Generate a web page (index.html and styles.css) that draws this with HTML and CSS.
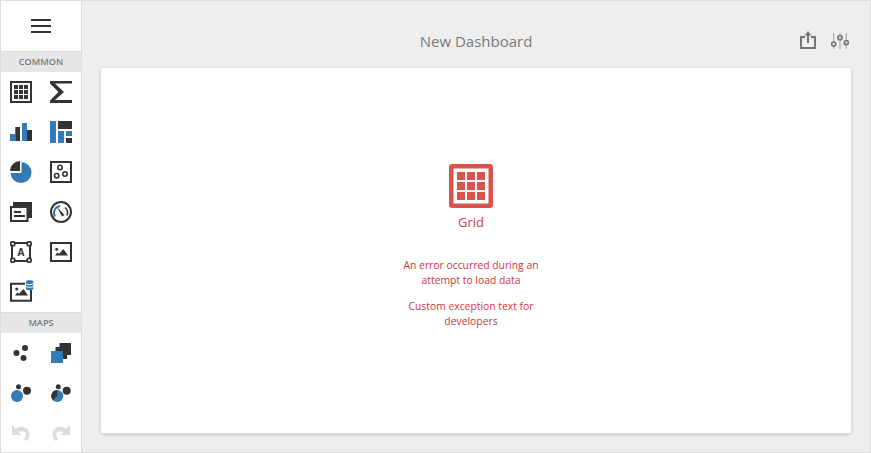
FILE: index.html
```html
<!DOCTYPE html>
<html lang="en">
<head>
  <meta charset="UTF-8">
  <title>New Dashboard</title>
  <link rel="stylesheet" href="styles.css">
</head>
<body>

  <div class="app">
    <div class="toolbox">
      <div class="menu-btn">
        <svg width="22" height="16" viewBox="0 0 22 16"><path d="M1 2h20M1 8h20M1 14h20" stroke="#333" stroke-width="2"/></svg>
      </div>

      <div class="group-title">COMMON</div>
      <div class="items">
        <div class="item">
          <svg width="22" height="22" viewBox="0 0 22 22"><rect x="1" y="1" width="20" height="20" fill="none" stroke="#333" stroke-width="2"/><path d="M4 4h4v4H4zM9 4h4v4H9zM14 4h4v4h-4zM4 9h4v4H4zM9 9h4v4H9zM14 9h4v4h-4zM4 14h4v4H4zM9 14h4v4H9zM14 14h4v4h-4z" fill="#333"/></svg>
        </div>
        <div class="item">
          <svg width="22" height="22" viewBox="0 0 22 22"><path d="M0 0h22v2.500H5l9 8.500-9 8h17V22H0v-2.500L8.500 11 0 2.500z" fill="#333"/></svg>
        </div>
        <div class="item">
          <svg width="22" height="22" viewBox="0 0 22 22"><path d="M0 13h5.300v7H0zM12 2h5v18h-5z" fill="#337ab7"/><path d="M5.300 6H10v14H5.300zM17 9h5v11h-5z" fill="#333"/></svg>
        </div>
        <div class="item">
          <svg width="22" height="22" viewBox="0 0 22 22"><path d="M0 0h6v22H0zM8 10h6v12H8zM16 10h6v5h-6z" fill="#337ab7"/><path d="M8 0h14v8H8zM16 17h6v5h-6z" fill="#333"/></svg>
        </div>
        <div class="item">
          <svg width="22" height="22" viewBox="0 0 22 22"><path d="M0 10A10 10 0 0 1 10 0v10z" fill="#333"/><path d="M11.500 1a10.500 10.500 0 1 1-11 11h11z" fill="#337ab7"/></svg>
        </div>
        <div class="item">
          <svg width="22" height="22" viewBox="0 0 22 22"><rect x="1" y="1" width="20" height="20" fill="none" stroke="#333" stroke-width="2"/><g fill="none" stroke="#333" stroke-width="1.600"><circle cx="10" cy="6.500" r="2.200"/><circle cx="6.700" cy="14.700" r="2.200"/><circle cx="15" cy="13" r="2.200"/></g></svg>
        </div>
        <div class="item">
          <svg width="22" height="20" viewBox="0 0 22 20"><path d="M3 0h19v16H3z" fill="#333"/><rect x="1" y="5" width="16.500" height="14" fill="#fff" stroke="#333" stroke-width="2"/><path d="M4 9h7v2H4zM4 13h11v2H4z" fill="#333"/></svg>
        </div>
        <div class="item">
          <svg width="22" height="22" viewBox="0 0 22 22"><circle cx="11" cy="11" r="10" fill="none" stroke="#333" stroke-width="2"/><path d="M5 15.500A7 7 0 0 1 10 5" fill="none" stroke="#337ab7" stroke-width="2"/><path d="M15 6.500a7 7 0 0 1 2 8" fill="none" stroke="#333" stroke-width="1.500"/><path d="M7 6l7.500 8-2.500 1.500z" fill="#333"/></svg>
        </div>
        <div class="item">
          <svg width="22" height="22" viewBox="0 0 22 22"><rect x="2" y="2" width="18" height="18" fill="none" stroke="#333" stroke-width="2"/><g fill="#fff" stroke="#333" stroke-width="1.700"><rect x="0.900" y="0.900" width="3.800" height="3.800" rx="1"/><rect x="17.300" y="0.900" width="3.800" height="3.800" rx="1"/><rect x="0.900" y="17.300" width="3.800" height="3.800" rx="1"/><rect x="17.300" y="17.300" width="3.800" height="3.800" rx="1"/></g><text class="glyph" x="11" y="14.500" text-anchor="middle">A</text></svg>
        </div>
        <div class="item">
          <svg width="22" height="20" viewBox="0 0 22 20"><rect x="1" y="1" width="20" height="18" fill="none" stroke="#333" stroke-width="2"/><circle cx="6.700" cy="7.300" r="1.500" fill="#333"/><path d="M5 13.500l2.500-3 1.500 1.300L13.500 7l4.500 6.500z" fill="#333"/></svg>
        </div>
        <div class="item item-raised">
          <svg width="24" height="22" viewBox="0 0 24 22"><path d="M15 2.700H0v19h22V10h-2v9.700H2V4.700h13z" fill="#333"/><circle cx="6.700" cy="9" r="1.500" fill="#333"/><path d="M5 15.500l2.500-3 1.500 1.300L13.500 9l4.500 6.500z" fill="#333"/><path d="M16 1.500C16 -.2 23.300 -.2 23.300 1.500v7.500C23.300 10.500 16 10.500 16 9z" fill="#337ab7"/><path d="M16 3.800c1.500 1 5.800 1 7.300 0M16 6.500c1.500 1 5.800 1 7.300 0" fill="none" stroke="#fff"/></svg>
        </div>
      </div>

      <div class="group-title">MAPS</div>
      <div class="items">
        <div class="item">
          <svg width="16" height="16" viewBox="0 0 16 16"><circle cx="3.500" cy="8" r="3" fill="#333"/><circle cx="12" cy="3" r="3" fill="#333"/><circle cx="10.500" cy="13" r="3" fill="#333"/></svg>
        </div>
        <div class="item">
          <svg width="20" height="20" viewBox="0 0 20 20"><path d="M8.500 0H20v12h-4v4h-4v-4H4.500V4h4z" fill="#333"/><rect x="0" y="8" width="12" height="12" fill="#337ab7"/></svg>
        </div>
        <div class="item">
          <svg width="20" height="20" viewBox="0 0 20 20"><circle cx="6" cy="13" r="6" fill="#337ab7"/><circle cx="7.500" cy="3.700" r="2.500" fill="#333"/><circle cx="16" cy="7.700" r="4" fill="#333"/></svg>
        </div>
        <div class="item">
          <svg width="20" height="20" viewBox="0 0 20 20"><circle cx="6.300" cy="13" r="6" fill="#337ab7"/><path d="M6.300 7v6l-4.300 4.200A6 6 0 0 1 6.300 7z" fill="#333"/><circle cx="7.300" cy="3.700" r="2.500" fill="#333"/><circle cx="15.700" cy="7.700" r="4" fill="#333"/></svg>
        </div>
        <div class="item">
          <svg width="18" height="16" viewBox="0 0 18 16"><path d="M0 0v10h9.500L6.500 7c3-1.500 6-1 7 1 .8 1.800 0 4-2 6l3 2c3-3 4-7 2-10.500C14 1.500 8 1 4 4z" fill="#dcdcdc"/></svg>
        </div>
        <div class="item">
          <svg width="18" height="16" viewBox="0 0 18 16"><path d="M18 0v10H8.500l3-3c-3-1.500-6-1-7 1-.8 1.800 0 4 2 6l-3 2c-3-3-4-7-2-10.500C4 1.500 10 1 14 4z" fill="#dcdcdc"/></svg>
        </div>
      </div>
    </div>

    <div class="main">
      <div class="header">
        <div class="title">New Dashboard</div>
        <div class="actions">
          <svg width="16" height="18" viewBox="0 0 16 18"><path d="M5 6H1v11h14V6h-4" fill="none" stroke="#757575" stroke-width="2"/><path d="M8 12V2" stroke="#757575" stroke-width="2"/><path d="M4.500 4.500L8 0l3.500 4.500z" fill="#757575"/></svg>
          <svg width="18" height="16" viewBox="0 0 18 16"><g stroke="#a0a0a0" fill="none" stroke-width="1"><path d="M2.700 0v16M9 0v16M15.300 0v16"/></g><g fill="#eee" stroke="#757575" stroke-width="1.700"><circle cx="2.700" cy="11" r="2"/><circle cx="9" cy="4.700" r="2"/><circle cx="15.300" cy="9.700" r="2"/></g></svg>
        </div>
      </div>

      <div class="card">
        <svg class="error-icon" width="44" height="44" viewBox="0 0 44 44"><rect x="2.250" y="2.250" width="39.500" height="39.500" rx="1" fill="none" stroke="#d9534f" stroke-width="4.500"/><path d="M8 8h8v8H8zM18 8h8v8h-8zM28 8h8v8h-8zM8 18h8v8H8zM18 18h8v8h-8zM28 18h8v8h-8zM8 28h8v8H8zM18 28h8v8h-8zM28 28h8v8h-8z" fill="#d9534f"/></svg>
        <div class="error-name">Grid</div>
        <div class="error-text">An error occurred during an<br>attempt to load data</div>
        <div class="error-text error-detail">Custom exception text for<br>developers</div>
      </div>
    </div>
  </div>

</body>
</html>
```

FILE: styles.css
```css
html, body {
  height: 100%;
}

body {
  margin: 0;
  background-color: #eee;
  font-family: "Open Sans", sans-serif;
}

.app {
  display: flex;
  height: 453px;
  box-sizing: border-box;
  border: 1px solid #ddd;
  overflow: hidden;
}

.toolbox {
  width: 80px;
  flex-shrink: 0;
  background-color: #fff;
  border-right: 1px solid #ddd;
}

.menu-btn {
  height: 50px;
  display: flex;
  align-items: center;
  justify-content: center;
  border-bottom: 1px solid #ddd;
}

.group-title {
  height: 20px;
  line-height: 20px;
  background-color: #e6e6e6;
  color: #7a7a7a;
  font-size: 9.200px;
  font-weight: 600;
  text-align: center;
}

.items {
  display: grid;
  grid-template-columns: 40px 40px;
  grid-auto-rows: 40px;
  border-bottom: 1px solid #ddd;
}

.items:last-child {
  border-bottom: none;
}

.item {
  display: flex;
  align-items: center;
  justify-content: center;
}

.item-raised {
  padding-bottom: 2px;
  box-sizing: border-box;
  padding-left: 2px;
}

.glyph {
  font-family: "Open Sans", sans-serif;
  font-size: 10px;
  font-weight: 700;
  fill: #333;
}

.main {
  flex: 1;
  padding: 0 19px 19px 19px;
  display: flex;
  flex-direction: column;
  min-width: 0;
}

.header {
  height: 67px;
  display: flex;
  align-items: center;
  justify-content: center;
  position: relative;
  box-sizing: border-box;
  padding-top: 13px;
}

.title {
  color: #7a7a7a;
  font-size: 15px;
}

.actions {
  position: absolute;
  right: 2px;
  top: 30px;
  display: flex;
  gap: 15px;
  align-items: flex-end;
}

.card {
  flex: 1;
  background-color: #fff;
  border-radius: 2px;
  box-shadow: 0 1px 4px rgba(0, 0, 0, 0.2);
  display: flex;
  flex-direction: column;
  align-items: center;
  padding-top: 96px;
  padding-right: 10px;
}

.error-name {
  color: #c9404a;
  font-size: 13px;
  line-height: 20px;
  margin-top: 4px;
}

.error-text {
  color: #d1343e;
  font-size: 10.350px;
  line-height: 15px;
  text-align: center;
  margin-top: 26px;
}

.error-detail {
  margin-top: 11px;
}
```
